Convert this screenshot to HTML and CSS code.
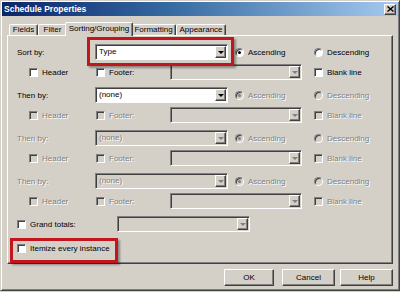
FILE: index.html
```html
<!DOCTYPE html>
<html lang="en">
<head>
    <meta charset="UTF-8">
    <title>Schedule Properties</title>
    <link rel="stylesheet" href="styles.css">
</head>
<body>
    <div class="dialog">
        <div class="titlebar">
            <span class="title">Schedule Properties</span>
            <span class="close">
                <svg width="7" height="6" viewBox="0 0 7 6"><path d="M0.5 0.5 L6.5 5.5 M6.5 0.5 L0.5 5.5" stroke="#000" stroke-width="1.4"/></svg>
            </span>
        </div>

        <div class="tabs">
            <div class="tab tab-fields">Fields</div>
            <div class="tab tab-filter">Filter</div>
            <div class="tab tab-sorting active">Sorting/Grouping</div>
            <div class="tab tab-formatting">Formatting</div>
            <div class="tab tab-appearance">Appearance</div>
        </div>

        <div class="panel">
            <!-- Sort by -->
            <div class="group">
                <div class="row row-main">
                    <span class="label">Sort by:</span>
                    <div class="combo"><span class="val">Type</span><span class="arrow"><i></i></span></div>
                    <label class="opt asc"><span class="radio"><b></b></span>Ascending</label>
                    <label class="opt"><span class="radio"></span>Descending</label>
                </div>
                <div class="row row-sub">
                    <label class="opt hdr"><span class="check"></span>Header</label>
                    <label class="opt ftr"><span class="check"></span>Footer:</label>
                    <div class="combo wide disabled"><span class="val"></span><span class="arrow"><i></i></span></div>
                    <label class="opt"><span class="check"></span>Blank line</label>
                </div>
            </div>

            <!-- Then by (enabled) -->
            <div class="group">
                <div class="row row-main">
                    <span class="label">Then by:</span>
                    <div class="combo"><span class="val">(none)</span><span class="arrow"><i></i></span></div>
                    <label class="opt asc disabled"><span class="radio"><b></b></span>Ascending</label>
                    <label class="opt disabled"><span class="radio"></span>Descending</label>
                </div>
                <div class="row row-sub disabled">
                    <label class="opt hdr"><span class="check"></span>Header</label>
                    <label class="opt ftr"><span class="check"></span>Footer:</label>
                    <div class="combo wide disabled"><span class="val"></span><span class="arrow"><i></i></span></div>
                    <label class="opt"><span class="check"></span>Blank line</label>
                </div>
            </div>

            <!-- Then by (disabled) -->
            <div class="group disabled">
                <div class="row row-main">
                    <span class="label">Then by:</span>
                    <div class="combo disabled"><span class="val">(none)</span><span class="arrow"><i></i></span></div>
                    <label class="opt asc"><span class="radio"><b></b></span>Ascending</label>
                    <label class="opt"><span class="radio"></span>Descending</label>
                </div>
                <div class="row row-sub">
                    <label class="opt hdr"><span class="check"></span>Header</label>
                    <label class="opt ftr"><span class="check"></span>Footer:</label>
                    <div class="combo wide disabled"><span class="val"></span><span class="arrow"><i></i></span></div>
                    <label class="opt"><span class="check"></span>Blank line</label>
                </div>
            </div>

            <div class="group disabled">
                <div class="row row-main">
                    <span class="label">Then by:</span>
                    <div class="combo disabled"><span class="val">(none)</span><span class="arrow"><i></i></span></div>
                    <label class="opt asc"><span class="radio"><b></b></span>Ascending</label>
                    <label class="opt"><span class="radio"></span>Descending</label>
                </div>
                <div class="row row-sub">
                    <label class="opt hdr"><span class="check"></span>Header</label>
                    <label class="opt ftr"><span class="check"></span>Footer:</label>
                    <div class="combo wide disabled"><span class="val"></span><span class="arrow"><i></i></span></div>
                    <label class="opt"><span class="check"></span>Blank line</label>
                </div>
            </div>

            <div class="row totals">
                <label class="opt totals-label"><span class="check"></span>Grand totals:</label>
                <div class="combo disabled"><span class="val"></span><span class="arrow"><i></i></span></div>
            </div>

            <div class="row itemize">
                <label class="opt"><span class="check"></span>Itemize every instance</label>
            </div>
        </div>

        <div class="buttons">
            <div class="btn btn-ok">OK</div>
            <div class="btn btn-cancel">Cancel</div>
            <div class="btn btn-help">Help</div>
        </div>

        <div class="highlight hl-sort"></div>
        <div class="highlight hl-itemize"></div>
    </div>
</body>
</html>
```

FILE: styles.css
```css
* {
    box-sizing: border-box;
    margin: 0;
    padding: 0;
}

body {
    width: 400px;
    height: 292px;
    overflow: hidden;
    background: #d4d0c8;
    font-family: 'Liberation Sans', Arial, sans-serif;
    font-size: 8px;
    color: #000;
}

.dialog {
    position: relative;
    width: 400px;
    height: 291px;
    padding: 1px 1px 0 1px;
    background: #d4d0c8;
    border: 1px solid;
    border-color: #d4d0c8 #404040 #404040 #d4d0c8;
    box-shadow: inset 1px 1px #fff, inset -1px -1px #808080;
}

/* title bar */
.titlebar {
    display: flex;
    align-items: center;
    justify-content: space-between;
    height: 14px;
    padding: 0 2px 0 2px;
    background: linear-gradient(to right, #0a246a 0%, #3a6ea5 45%, #a6caf0 100%);
    color: #fff;
    font-weight: bold;
    font-size: 8.5px;
}

.close {
    display: flex;
    align-items: center;
    justify-content: center;
    width: 12px;
    height: 11px;
    background: #d4d0c8;
    border: 1px solid;
    border-color: #fff #404040 #404040 #fff;
    box-shadow: inset -1px -1px #808080;
}

/* tabs */
.tabs {
    display: flex;
    align-items: flex-end;
    height: 19px;
    padding-left: 7px;
}

.tab {
    height: 11px;
    line-height: 9px;
    text-align: center;
    border: 1px solid;
    border-bottom: none;
    border-color: #fff #404040 transparent #fff;
    border-radius: 2px 2px 0 0;
    box-shadow: inset -1px 0 #808080;
    background: #d4d0c8;
}

.tab-fields { width: 29px; }
.tab-filter { width: 29px; }
.tab-formatting { width: 45px; }
.tab-appearance { width: 50px; }

.tab.active {
    position: relative;
    z-index: 1;
    width: 68px;
    height: 14px;
    line-height: 12px;
    margin: 0 -2px -1px -2px;
}

.tab-sorting { width: 64px; }

/* panel */
.panel {
    width: 386px;
    height: 229px;
    margin-left: 5px;
    padding: 8px 0 0 9px;
    border: 1px solid;
    border-color: #fff #404040 #404040 #fff;
    box-shadow: inset -1px -1px #808080;
}

.group {
    display: flex;
    flex-direction: column;
    gap: 4px;
    margin-bottom: 7px;
}

.row {
    display: flex;
    align-items: center;
    height: 16px;
    white-space: nowrap;
}

.row-main .label {
    width: 78px;
}

.row-main .combo + .opt {
    margin-left: 7px;
}

.asc {
    width: 79px;
}

.row-sub {
    padding-left: 12px;
}

.hdr { width: 67px; }
.ftr { width: 74px; }

.opt {
    display: flex;
    align-items: center;
    gap: 4px;
}

/* controls */
.check,
.radio {
    display: inline-flex;
    align-items: center;
    justify-content: center;
    width: 9px;
    height: 9px;
    flex-shrink: 0;
    background: #fff;
    border: 1px solid;
    border-color: #808080 #fff #fff #808080;
    box-shadow: inset 1px 1px #404040;
}

.radio {
    border-radius: 50%;
}

.radio b {
    width: 3px;
    height: 3px;
    border-radius: 50%;
    background: #000;
}

.combo {
    display: flex;
    align-items: stretch;
    width: 133px;
    height: 16px;
    padding: 1px;
    background: #fff;
    border: 1px solid;
    border-color: #808080 #fff #fff #808080;
    box-shadow: inset 1px 1px #404040;
}

.combo.wide {
    width: 132px;
    margin-right: 12px;
}

.combo .val {
    flex: 1;
    line-height: 12px;
    padding-left: 2px;
}

.combo .arrow {
    display: flex;
    align-items: center;
    justify-content: center;
    width: 11px;
    background: #d4d0c8;
    border: 1px solid;
    border-color: #fff #404040 #404040 #fff;
    box-shadow: inset -1px -1px #808080;
}

.combo .arrow i {
    width: 0;
    height: 0;
    border-left: 3px solid transparent;
    border-right: 3px solid transparent;
    border-top: 3px solid #000;
}

/* disabled look */
.combo.disabled {
    background: #d4d0c8;
}

.combo.disabled .arrow i {
    border-top-color: #808080;
}

.disabled,
.disabled .label,
.combo.disabled .val {
    color: #808080;
    text-shadow: 1px 1px 0 #fff;
}

.disabled .check,
.disabled .radio {
    background: #d4d0c8;
}

.disabled .radio b {
    background: #808080;
}

.totals {
    margin-top: 2px;
}

.totals-label {
    width: 100px;
}

.itemize {
    margin-top: 8px;
}

/* buttons */
.buttons {
    display: flex;
    justify-content: flex-end;
    width: 386px;
    margin: 5px 0 0 5px;
}

.btn {
    height: 17px;
    line-height: 15px;
    text-align: center;
    border: 1px solid;
    border-color: #fff #404040 #404040 #fff;
    box-shadow: inset -1px -1px #808080;
}

.btn-ok { width: 50px; }
.btn-cancel { width: 53px; margin-left: 8px; }
.btn-help { width: 53px; margin-left: 5px; }

/* red annotation boxes */
.highlight {
    position: absolute;
    border: 3px solid #c3161c;
    box-shadow: 2px 2px 2px rgba(0, 0, 0, 0.35);
}

.hl-sort {
    left: 86px;
    top: 36px;
    width: 147px;
    height: 29px;
}

.hl-itemize {
    left: 9px;
    top: 237px;
    width: 108px;
    height: 25px;
}
```
